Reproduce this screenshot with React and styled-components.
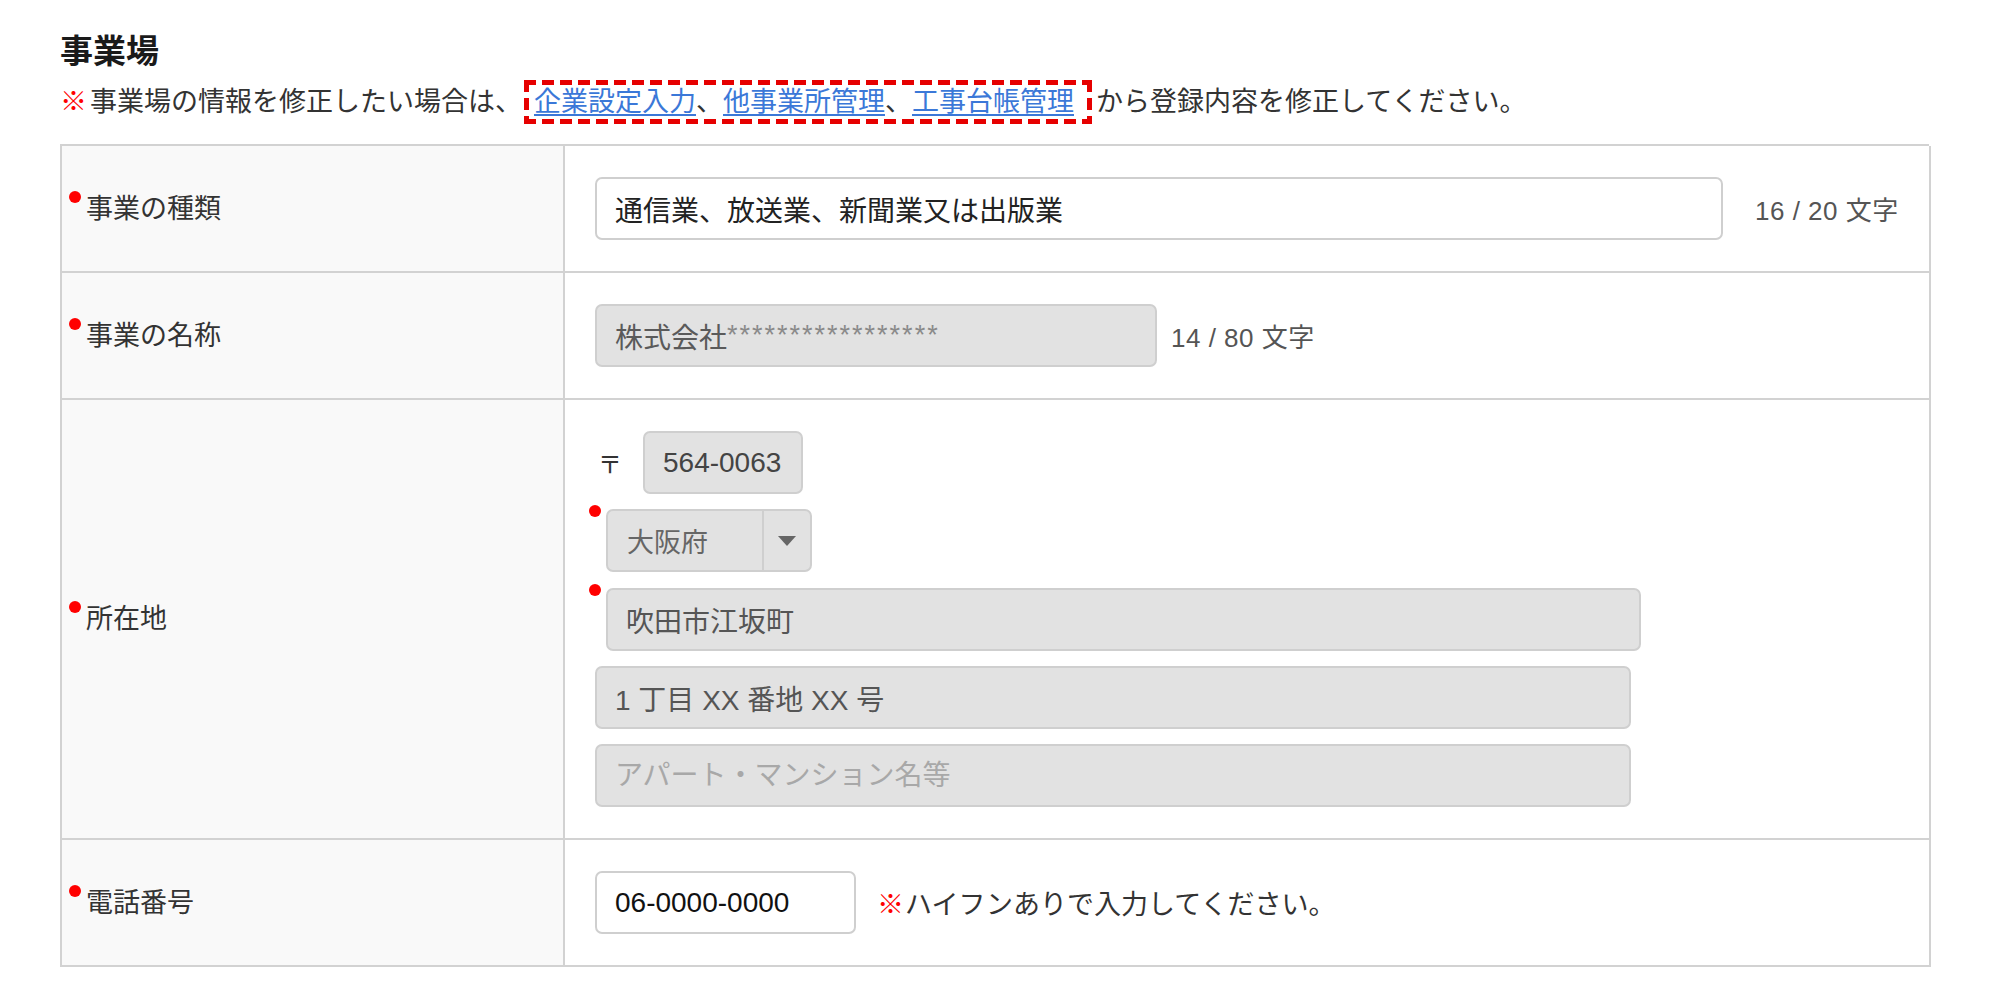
import React from "react";
import styled, { createGlobalStyle, css } from "styled-components";

const GlobalStyle = createGlobalStyle`
  body {
    margin: 0;
    background: #fff;
    font-family: "Liberation Sans", "Noto Sans CJK JP", sans-serif;
    color: #333;
  }
`;

const Page = styled.div`
  padding: 28px 0 40px 60px;
`;

const Title = styled.h2`
  margin: 0;
  font-family: "Noto Sans CJK JP", sans-serif;
  font-size: 33px;
  font-weight: 700;
  line-height: 43px;
  color: #1a1a1a;
`;

const Note = styled.div`
  display: flex;
  align-items: center;
  height: 44px;
  margin-top: 9px;
  font-size: 27px;
  line-height: 36px;
  color: #333;
  white-space: nowrap;
`;

const Mark = styled.span`
  color: #f00;
  font-weight: 700;
  margin-right: ${(p) => p.$gap || 3}px;
`;

// dashed frame drawn with gradients so the dashes come out long like the original
const LinkBox = styled.span`
  display: inline-flex;
  align-items: center;
  padding: 5px 18px 5px 10px;
  margin: 0 4px 0 2px;
  line-height: 34px;
  background:
    repeating-linear-gradient(90deg, #e60000 0 12px, transparent 12px 18px) top left / 100% 5px no-repeat,
    repeating-linear-gradient(90deg, #e60000 0 12px, transparent 12px 18px) bottom left / 100% 5px no-repeat,
    repeating-linear-gradient(180deg, #e60000 0 12px, transparent 12px 18px) top left / 5px 100% no-repeat,
    repeating-linear-gradient(180deg, #e60000 0 12px, transparent 12px 18px) top right / 5px 100% no-repeat;
`;

const Link = styled.a`
  color: #3b78d8;
  text-decoration: underline;
  text-underline-offset: 3px;
  cursor: pointer;
`;

const Table = styled.div`
  margin-top: 20px;
  width: 1869px;
  box-sizing: border-box;
  display: grid;
  grid-template-columns: 503px 1fr;
  border-top: 2px solid #d2d2d2;
  border-left: 2px solid #d2d2d2;
`;

const LabelCell = styled.div`
  box-sizing: border-box;
  display: flex;
  align-items: center;
  padding-left: 7px;
  background: #f9f9f9;
  border-right: 2px solid #d2d2d2;
  border-bottom: 2px solid #d2d2d2;
`;

const Label = styled.div`
  display: flex;
  align-items: flex-start;
  font-size: 27px;
  line-height: 36px;
  color: #333;
`;

const Dot = styled.span`
  flex: none;
  width: 12px;
  height: 12px;
  border-radius: 50%;
  background: #f00;
  margin-right: 5px;
  margin-top: ${(p) => p.$top || 0}px;
`;

const ValueCell = styled.div`
  box-sizing: border-box;
  display: flex;
  flex-direction: ${(p) => (p.$column ? "column" : "row")};
  align-items: ${(p) => (p.$column ? "flex-start" : "center")};
  gap: ${(p) => (p.$column ? "15px" : "0")};
  padding: 31px 30px 31px;
  border-right: 2px solid #d2d2d2;
  border-bottom: 2px solid #d2d2d2;
`;

const fieldStyle = css`
  box-sizing: border-box;
  height: 63px;
  width: ${(p) => p.$width}px;
  padding: 0 18px;
  border: 2px solid #cfcfcf;
  border-radius: 7px;
  background: ${(p) => (p.$gray ? "#e2e2e2" : "#fff")};
  font-family: "Liberation Sans", "Noto Sans CJK JP", sans-serif;
  font-size: 28px;
  color: ${(p) => p.$color || "#222"};
  outline: none;
`;

const Field = styled.input`
  ${fieldStyle}
  &::placeholder {
    color: #a8a8a8;
  }
`;

const FieldBox = styled.div`
  ${fieldStyle}
  display: flex;
  align-items: center;
  white-space: nowrap;
`;

const Stars = styled.span`
  color: #8a8a8a;
  letter-spacing: 2px;
  font-size: 27px;
`;

const Counter = styled.span`
  margin-left: ${(p) => p.$gap}px;
  font-size: 26px;
  letter-spacing: 0.5px;
  color: #555;
  white-space: nowrap;
`;

const PostalRow = styled.div`
  display: flex;
  align-items: center;
`;

const Yubin = styled.span`
  width: 45px;
  padding-left: 3px;
  font-size: 24px;
  color: #333;
`;

const RequiredRow = styled.div`
  display: flex;
  align-items: flex-start;
  margin-left: -6px;
  margin-top: ${(p) => p.$extra || 0}px;
`;

const SelectBox = styled.div`
  box-sizing: border-box;
  display: flex;
  width: 206px;
  height: 63px;
  border: 2px solid #cfcfcf;
  border-radius: 7px;
  background: #e2e2e2;
`;

const SelectValue = styled.div`
  flex: 1;
  display: flex;
  align-items: center;
  padding-left: 19px;
  font-size: 27px;
  color: #666;
`;

const SelectArrow = styled.div`
  width: 46px;
  display: flex;
  align-items: center;
  justify-content: center;
  border-left: 2px solid #cfcfcf;
  &::after {
    content: "";
    border-left: 9px solid transparent;
    border-right: 9px solid transparent;
    border-top: 10px solid #666;
  }
`;

const Hint = styled.span`
  margin-left: 21px;
  font-size: 27px;
  color: #333;
  white-space: nowrap;
`;

const App = () => {
  return (
    <Page>
      <GlobalStyle />
      <Title>事業場</Title>
      <Note>
        <Mark>※</Mark>
        事業場の情報を修正したい場合は、
        <LinkBox>
          <Link>企業設定入力</Link>、<Link>他事業所管理</Link>、
          <Link>工事台帳管理</Link>
        </LinkBox>
        から登録内容を修正してください。
      </Note>

      <Table>
        <LabelCell>
          <Label>
            <Dot />
            事業の種類
          </Label>
        </LabelCell>
        <ValueCell>
          <Field $width={1128} defaultValue="通信業、放送業、新聞業又は出版業" />
          <Counter $gap={32}>16 / 20 文字</Counter>
        </ValueCell>

        <LabelCell>
          <Label>
            <Dot />
            事業の名称
          </Label>
        </LabelCell>
        <ValueCell>
          <FieldBox $width={562} $gray $color="#5a5a5a">
            株式会社<Stars>*****************</Stars>
          </FieldBox>
          <Counter $gap={14}>14 / 80 文字</Counter>
        </ValueCell>

        <LabelCell>
          <Label>
            <Dot />
            所在地
          </Label>
        </LabelCell>
        <ValueCell $column>
          <PostalRow>
            <Yubin>〒</Yubin>
            <Field $width={160} $gray $color="#444" readOnly defaultValue="564-0063" />
          </PostalRow>
          <RequiredRow>
            <Dot $top={-4} />
            <SelectBox>
              <SelectValue>大阪府</SelectValue>
              <SelectArrow />
            </SelectBox>
          </RequiredRow>
          <RequiredRow $extra={1}>
            <Dot $top={-4} />
            <Field $width={1035} $gray $color="#555" readOnly defaultValue="吹田市江坂町" />
          </RequiredRow>
          <Field $width={1036} $gray $color="#555" readOnly defaultValue="1 丁目 XX 番地 XX 号" />
          <Field $width={1036} $gray readOnly placeholder="アパート・マンション名等" />
        </ValueCell>

        <LabelCell>
          <Label>
            <Dot />
            電話番号
          </Label>
        </LabelCell>
        <ValueCell>
          <Field $width={261} $color="#111" defaultValue="06-0000-0000" />
          <Hint>
            <Mark $gap={1}>※</Mark>ハイフンありで入力してください。
          </Hint>
        </ValueCell>
      </Table>
    </Page>
  );
};

export default App;
